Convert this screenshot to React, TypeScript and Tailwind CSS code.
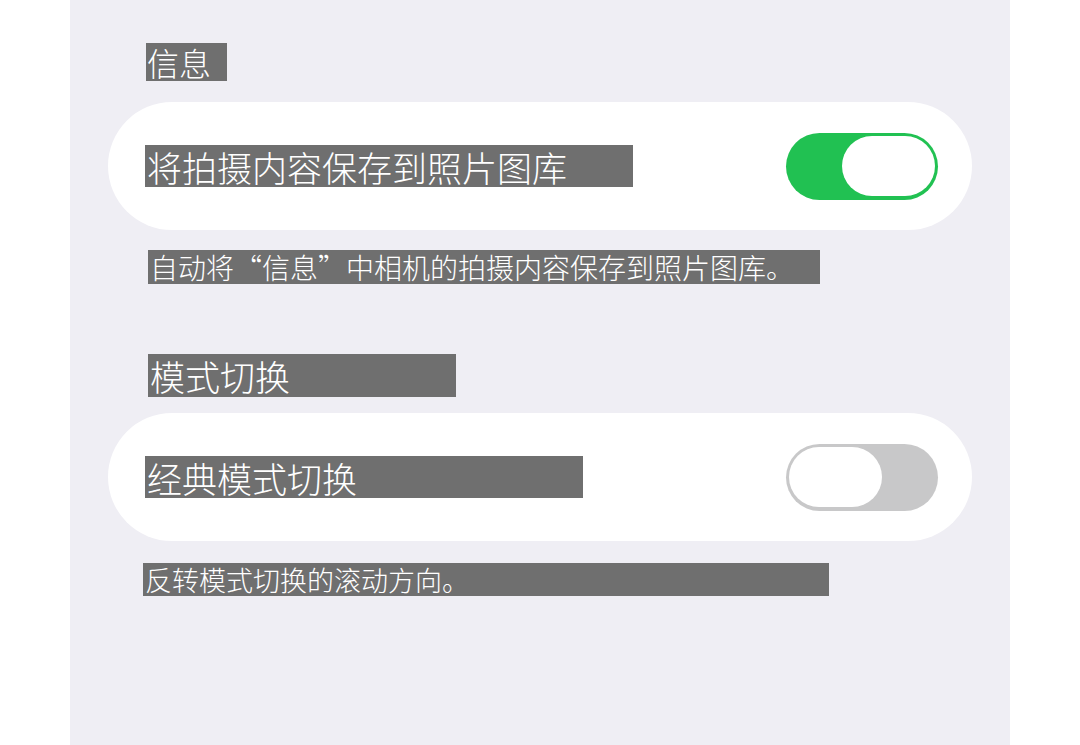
import React from "react";

const font = { fontFamily: '"Noto Sans CJK SC", "Noto Sans", sans-serif' };

function Toggle({ on }: { on: boolean }) {
  return (
    <div
      className={`flex h-[67px] w-[152px] shrink-0 items-center rounded-full p-[3px] ${
        on ? "justify-end bg-[#21c152]" : "justify-start bg-[#c8c8c9]"
      }`}
    >
      <div className="h-[60px] w-[93px] rounded-full bg-white" />
    </div>
  );
}

function Row({ label, width, on }: { label: string; width: string; on: boolean }) {
  return (
    <div className="flex h-[128px] items-center justify-between rounded-full bg-white pl-[37px] pr-[34px]">
      <span className={`flex h-[42px] items-center bg-[#6f6f6f] pl-[2px] text-[35px] font-light leading-none text-white ${width}`}>
        {label}
      </span>
      <Toggle on={on} />
    </div>
  );
}

export default function App() {
  return (
    <div className="flex h-[745px] w-[1080px] justify-center overflow-hidden bg-white" style={font}>
      <div className="flex w-[940px] flex-col bg-[#efeef4] px-[38px] pt-[43px]">
        {/* 信息 */}
        <span className="ml-[38px] flex h-[38px] w-[81px] items-center bg-[#6f6f6f] pl-[1px] text-[32px] font-light leading-none text-white">
          信息
        </span>
        <div className="mt-[21px]">
          <Row label="将拍摄内容保存到照片图库" width="w-[488px]" on />
        </div>
        <span className="ml-[40px] mt-[20px] flex h-[34px] w-[672px] items-center bg-[#6f6f6f] pl-[2px] text-[28px] font-light leading-none text-white">
          自动将“信息”中相机的拍摄内容保存到照片图库。
        </span>

        {/* 模式切换 */}
        <span className="ml-[40px] mt-[70px] flex h-[43px] w-[308px] items-center bg-[#6f6f6f] pl-[2px] text-[35px] font-light leading-none text-white">
          模式切换
        </span>
        <div className="mt-[16px]">
          <Row label="经典模式切换" width="w-[438px]" on={false} />
        </div>
        <span className="ml-[35px] mt-[22px] flex h-[33px] w-[686px] items-center bg-[#6f6f6f] pl-[2px] text-[27px] font-light leading-none text-white">
          反转模式切换的滚动方向。
        </span>
      </div>
    </div>
  );
}
